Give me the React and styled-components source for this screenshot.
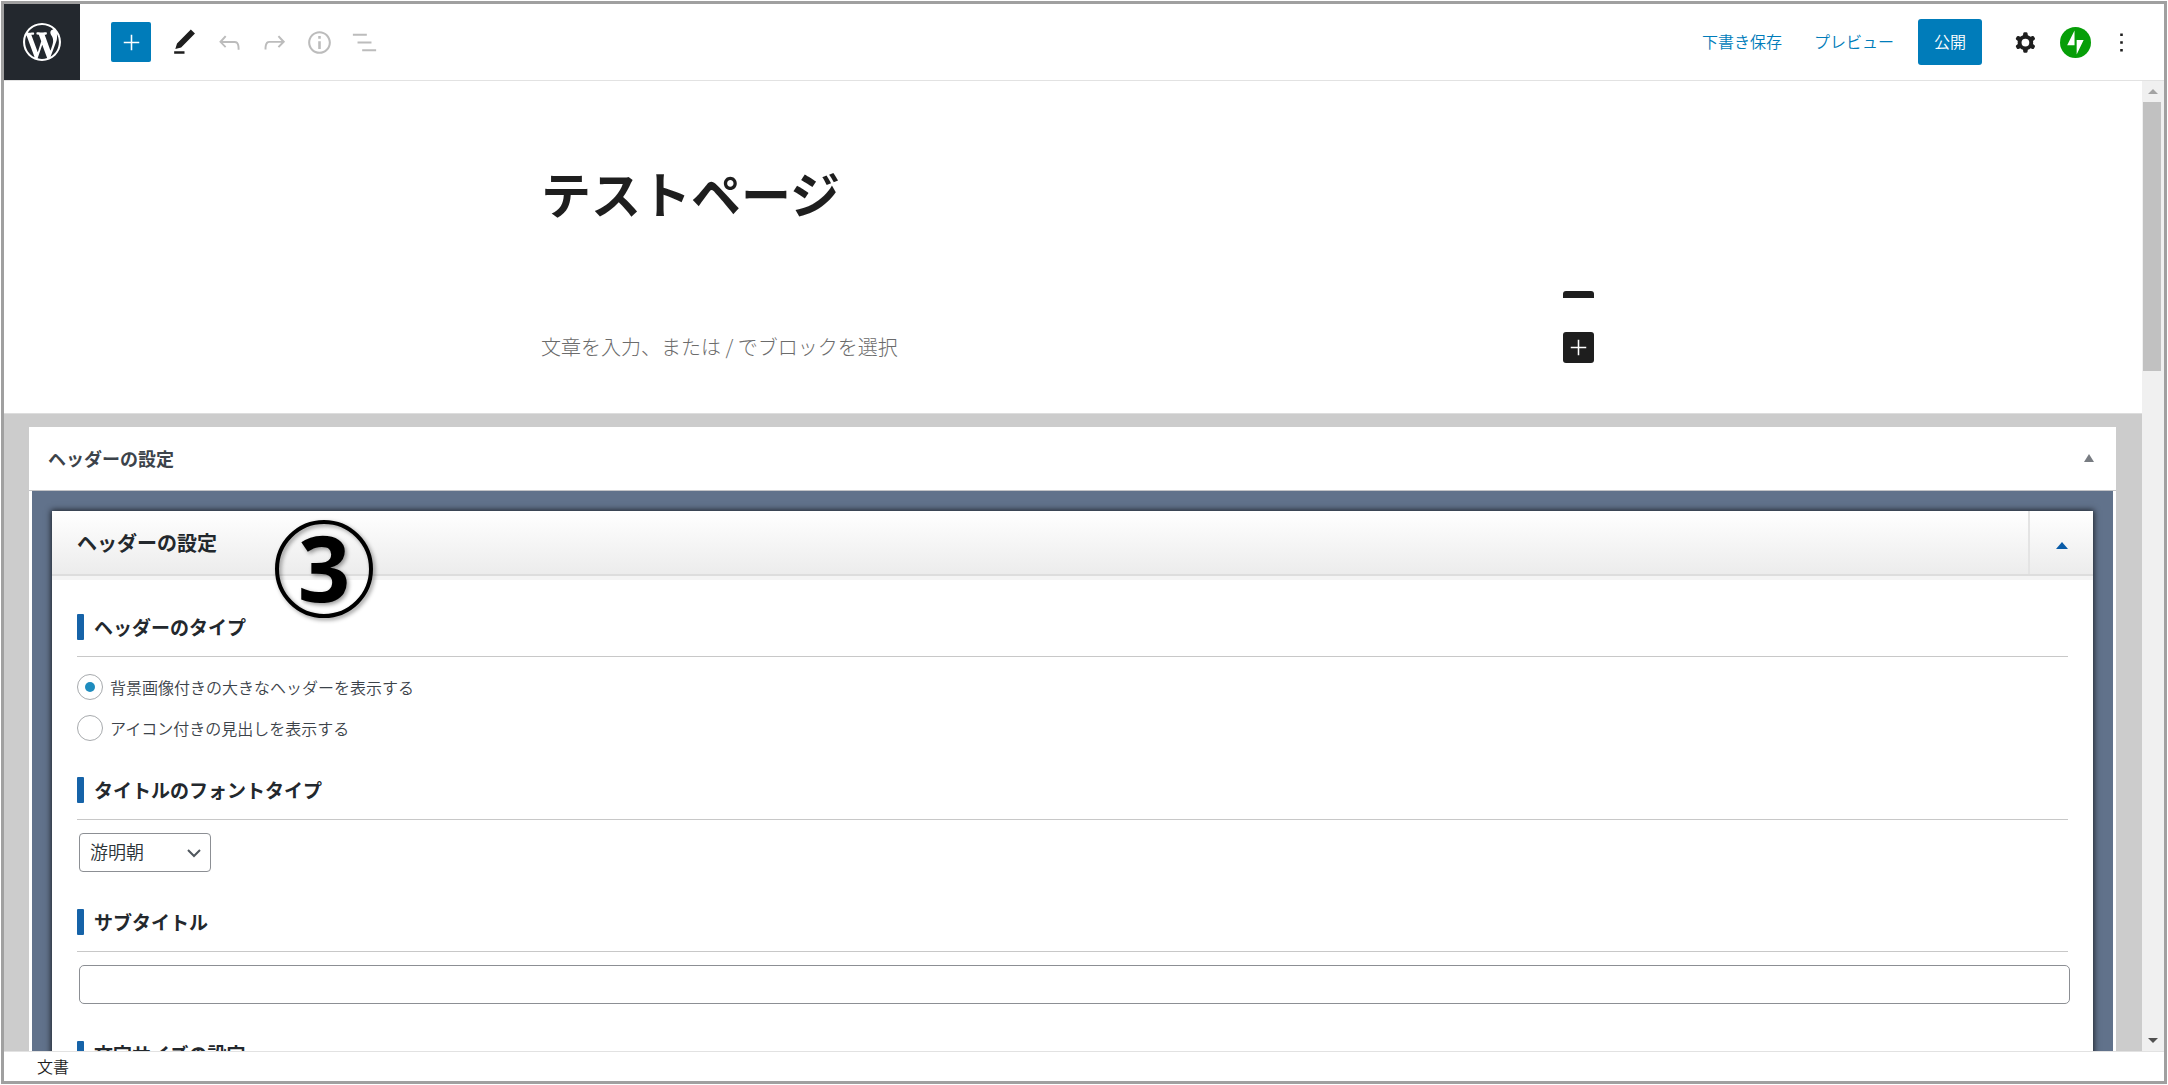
import React from 'react';
import styled, { createGlobalStyle } from 'styled-components';

const GlobalStyle = createGlobalStyle`
    * {
        box-sizing: border-box;
    }

    body {
        margin: 0;
        background: #fff;
        color: #3c434a;
        font-family: "Noto Sans CJK JP", "Noto Sans", sans-serif;
        font-size: 16px;
        font-weight: 350;
    }

    button, input, select {
        font-family: inherit;
        font-weight: inherit;
    }
`;

const Frame = styled.div`
    display: flex;
    flex-direction: column;
    height: calc(100vh - 2px);
    margin: 1px;
    border: 3px solid #a0a0a0;
    background: #fff;
    overflow: hidden;
`;

/* top bar */

const TopBar = styled.header`
    display: flex;
    align-items: center;
    justify-content: space-between;
    flex: none;
    border-bottom: 1px solid #e2e2e2;
`;

const Tools = styled.div`
    display: flex;
    align-items: center;
`;

const SiteLink = styled.a`
    display: flex;
    align-items: center;
    justify-content: center;
    width: 76px;
    height: 76px;
    margin-right: 31px;
    background: #23282e;
    color: #fff;
`;

const InserterButton = styled.button`
    display: flex;
    align-items: center;
    justify-content: center;
    width: 40px;
    height: 40px;
    margin-right: 10px;
    padding: 0;
    border: 0;
    border-radius: 2px;
    background: #007cba;
    color: #fff;
`;

const IconButton = styled.button`
    display: flex;
    align-items: center;
    justify-content: center;
    width: ${({ $wide }) => ($wide ? '50px' : '46px')};
    height: 46px;
    padding: ${({ $wide }) => ($wide ? '0 4px 0 0' : '0')};
    border: 0;
    background: none;
    color: #1e1e1e;
`;

const MutedButton = styled(IconButton)`
    width: 45px;
    color: #bcbcbc;
`;

const Actions = styled.div`
    display: flex;
    align-items: center;
    padding-right: 20px;
`;

const TextButton = styled.button`
    margin-right: ${({ $last }) => ($last ? '24px' : '32px')};
    padding: 0 0 3px;
    border: 0;
    background: none;
    color: #007cba;
    font-size: 16px;
    line-height: 24px;
`;

const PublishButton = styled.button`
    height: 46px;
    margin-right: 20px;
    padding: 0 16px 3px;
    border: 0;
    border-radius: 3px;
    background: #007cba;
    color: #fff;
    font-size: 16px;
`;

/* scrolling area */

const Body = styled.div`
    display: flex;
    flex: 1;
    min-height: 0;
`;

const Content = styled.main`
    flex: 1;
    min-width: 0;
    overflow: hidden;
    background: #ccc;
`;

const ScrollBar = styled.div`
    display: flex;
    flex-direction: column;
    width: 22px;
    background: #f0f0f0;
`;

const ScrollArrow = styled.div`
    display: flex;
    align-items: center;
    justify-content: center;
    height: 21px;
    color: ${({ $dim }) => ($dim ? '#a3a3a3' : '#505050')};
`;

const ScrollTrack = styled.div`
    flex: 1;
    padding: 0 3px 0 1px;
`;

const ScrollThumb = styled.div`
    height: 29%;
    background: #c1c1c1;
`;

const Editor = styled.section`
    padding: 75px 0 48px;
    border-bottom: 1px solid #ddd;
    background: #fff;
`;

const Column = styled.div`
    max-width: 1064px;
    margin: 0 auto;
`;

const PageTitle = styled.h1`
    margin: 0 0 63px;
    color: #1e1e1e;
    font-size: 50px;
    font-weight: 700;
    line-height: 72px;
`;

const ClippedBlock = styled.div`
    width: 31px;
    height: 7px;
    margin: 0 11px 31px auto;
    border-radius: 3px 3px 0 0;
    background: #1e1e1e;
`;

const Paragraph = styled.div`
    display: flex;
    align-items: center;
    justify-content: space-between;
    padding-right: 11px;
    color: #6b6b6b;
    font-size: 20px;
    font-weight: 300;
    line-height: 36px;
`;

const BlockInserter = styled.button`
    display: flex;
    align-items: center;
    justify-content: center;
    width: 31px;
    height: 31px;
    padding: 0;
    border: 0;
    border-radius: 3px;
    background: #1e1e1e;
    color: #fff;
`;

/* meta box */

const MetaBox = styled.section`
    margin: 13px 26px 0 25px;
    background: #fff;
`;

const MetaHeader = styled.div`
    display: flex;
    align-items: center;
    justify-content: space-between;
    height: 64px;
    padding: 0 22px 2px 19px;
    border-bottom: 1px solid #c3c4c7;
`;

const MetaTitle = styled.h2`
    margin: 0;
    font-size: 18px;
    font-weight: 700;
    line-height: 24px;
`;

const ToggleButton = styled.button`
    display: flex;
    align-items: center;
    justify-content: center;
    padding: 0;
    border: 0;
    background: none;
    color: #787c82;
`;

const MetaInside = styled.div`
    margin: 0 3px;
    padding: 20px;
    background: #61728b;
`;

const Panel = styled.div`
    position: relative;
    background: #fff;
    box-shadow: 0 0 6px 1px rgba(0, 0, 0, 0.7);
`;

const PanelHeader = styled.div`
    display: flex;
    justify-content: space-between;
    height: 65px;
    border-bottom: 2px solid #ddd;
    background: linear-gradient(#fff, #ececec);
    box-shadow: 0 4px 0 #f4f4f4;
`;

const PanelTitle = styled.h3`
    margin: 0;
    padding: 18px 25px;
    color: #23282d;
    font-size: 20px;
    font-weight: 700;
    line-height: 28px;
`;

const PanelToggle = styled(ToggleButton)`
    width: 65px;
    padding-top: 6px;
    border-left: 2px solid #e4e4e4;
    color: #0a5ca8;
`;

const StepBadge = styled.div`
    position: absolute;
    top: 9px;
    left: 223px;
    display: flex;
    align-items: center;
    justify-content: center;
    width: 98px;
    height: 98px;
    padding-bottom: 4px;
    border: 4px solid #000;
    border-radius: 50%;
    color: #000;
    font-family: "Noto Sans", sans-serif;
    font-size: 92px;
    font-weight: 700;
    line-height: 86px;
    filter: drop-shadow(2px 2px 2px rgba(0, 0, 0, 0.4));
`;

const PanelBody = styled.div`
    display: flex;
    flex-direction: column;
    gap: 37px;
    padding: 38px 25px;
`;

const SectionTitle = styled.h4`
    display: flex;
    align-items: center;
    margin: 0 0 13px;
    padding-bottom: 16px;
    border-bottom: 1px solid #c8c8c8;
    color: #23282d;
    font-size: 19px;
    font-weight: 700;
    line-height: 26px;

    &::before {
        content: "";
        width: 7px;
        height: 26px;
        margin-right: 10px;
        border-radius: 1px;
        background: #1663a8;
    }
`;

const RadioList = styled.div`
    margin: -4px 0 -8px;
`;

const RadioRow = styled.label`
    display: flex;
    align-items: center;
    height: 41px;
    font-size: 16px;
`;

const Radio = styled.input`
    display: flex;
    align-items: center;
    justify-content: center;
    width: 26px;
    height: 26px;
    margin: 0 7px 0 0;
    border: 1px solid #a7aaad;
    border-radius: 50%;
    background: #fff;
    appearance: none;

    &:checked::before {
        content: "";
        width: 10px;
        height: 10px;
        border-radius: 50%;
        background: #1e8cbe;
    }
`;

const SelectWrap = styled.div`
    position: relative;
    width: 132px;
    margin-left: 2px;

    svg {
        position: absolute;
        top: 13px;
        right: 10px;
        color: #50575e;
        pointer-events: none;
    }
`;

const Select = styled.select`
    display: block;
    width: 100%;
    height: 39px;
    padding: 0 10px 3px;
    border: 1px solid #8c8f94;
    border-radius: 4px;
    background: #fff;
    color: #2c3338;
    font-size: 18px;
    appearance: none;
`;

const TextInput = styled.input`
    display: block;
    width: 100%;
    height: 39px;
    margin-left: 2px;
    padding: 0 10px;
    border: 1px solid #8c8f94;
    border-radius: 5px;
    background: #fff;
    font-size: 18px;
`;

const Footer = styled.footer`
    flex: none;
    height: 30px;
    padding-left: 33px;
    border-top: 1px solid #e2e2e2;
    color: #1e1e1e;
    font-size: 16px;
    line-height: 28px;
`;

const Icon = ({ d, size = 31, viewBox = '0 0 24 24' }) => (
    <svg width={size} height={size} viewBox={viewBox} fill="currentColor" fillRule="evenodd" aria-hidden="true">
        <path d={d} />
    </svg>
);

const Triangle = ({ down, width = 10, height = 8 }) => (
    <svg width={width} height={height} viewBox="0 0 10 8" preserveAspectRatio="none" fill="currentColor" aria-hidden="true">
        <path d={down ? 'M0 0h10L5 8z' : 'M0 8h10L5 0z'} />
    </svg>
);

const wordpress = 'M20 10c0-5.51-4.49-10-10-10C4.48 0 0 4.49 0 10c0 5.52 4.48 10 10 10 5.51 0 10-4.48 10-10zM7.78 15.37L4.37 6.22c.55-.02 1.17-.08 1.17-.08.5-.06.44-1.13-.06-1.11 0 0-1.45.11-2.37.11-.18 0-.37 0-.58-.01C4.12 2.69 6.87 1.11 10 1.11c2.33 0 4.45.87 6.05 2.34-.68-.11-1.65.39-1.65 1.58 0 .74.45 1.36.9 2.1.35.61.55 1.36.55 2.46 0 1.49-1.4 5-1.4 5l-3.03-8.37c.54-.02.82-.17.82-.17.5-.05.44-1.25-.06-1.22 0 0-1.44.12-2.38.12-.87 0-2.33-.12-2.33-.12-.5-.03-.56 1.2-.06 1.22l.92.08 1.26 3.41zM17.41 10c.24-.64.74-1.87.43-4.25.7 1.29 1.05 2.71 1.05 4.25 0 3.29-1.73 6.24-4.4 7.78.97-2.59 1.94-5.2 2.92-7.78zM6.1 18.09C3.12 16.65 1.11 13.53 1.11 10c0-1.3.23-2.48.72-3.59C3.25 10.3 4.67 14.2 6.1 18.09zm4.03-6.63l2.58 6.98c-.86.29-1.76.45-2.71.45-.79 0-1.57-.11-2.29-.33.81-2.38 1.62-4.74 2.42-7.1z';
const plus = 'M18 11.4h-5.4V6h-1.2v5.4H6v1.2h5.4V18h1.2v-5.4H18z';
const pencil = 'M20.1 5.1L16.9 2 6.2 12.7l-1.3 4.4 4.5-1.3L20.1 5.1zM4 20.8h8v-2H4v2z';
const undo = 'M18.3 11.7c-.6-.6-1.4-.9-2.3-.9H6.7l2.9-3.3-1.1-1-4.5 5L8.5 16l1-1-2.7-2.7H16c.5 0 .9.2 1.3.5 1 1 1 3.4 1 4.5v.3h1.5v-.2c0-1.5 0-4.3-1.5-5.7z';
const redo = 'M15.6 6.5l-1.1 1 2.9 3.3H8c-.9 0-1.7.3-2.3.9-1.4 1.5-1.4 4.2-1.4 5.6v.2h1.5v-.3c0-1.1 0-3.5 1-4.5.3-.3.7-.5 1.3-.5h9.2L14.5 15l1.1 1.1 4.6-4.6-4.6-5z';
const info = 'M12 3.2c-4.8 0-8.8 3.9-8.8 8.8 0 4.8 3.9 8.8 8.8 8.8 4.8 0 8.8-3.9 8.8-8.8 0-4.8-4-8.8-8.8-8.8zm0 16c-4 0-7.2-3.3-7.2-7.2C4.8 8 8 4.8 12 4.8s7.2 3.3 7.2 7.2c0 4-3.2 7.2-7.2 7.2zM11 17h2v-6h-2v6zm0-8h2V7h-2v2z';
const outline = 'M13.8 5.2H3v1.5h10.8V5.2zm-3.6 12v1.5H21v-1.5H10.2zm7.2-6H6.6v1.5h10.8v-1.5z';
const cog = 'M10.289 4.836A1 1 0 0111.275 4h1.306a1 1 0 01.987.836l.244 1.466c.787.26 1.503.679 2.108 1.218l1.393-.522a1 1 0 011.216.437l.653 1.13a1 1 0 01-.23 1.273l-1.148.944a6.025 6.025 0 010 2.435l1.149.946a1 1 0 01.23 1.272l-.653 1.13a1 1 0 01-1.216.437l-1.394-.522c-.605.54-1.32.958-2.108 1.218l-.244 1.466a1 1 0 01-.987.836h-1.306a1 1 0 01-.986-.836l-.244-1.466a5.995 5.995 0 01-2.108-1.218l-1.394.522a1 1 0 01-1.217-.436l-.653-1.131a1 1 0 01.23-1.272l1.149-.946a6.026 6.026 0 010-2.435l-1.148-.944a1 1 0 01-.23-1.272l.653-1.131a1 1 0 011.217-.437l1.393.522a5.994 5.994 0 012.108-1.218l.244-1.466zM14.929 12a3 3 0 11-6 0 3 3 0 016 0z';
const dots = 'M13 19h-2v-2h2v2zm0-6h-2v-2h2v2zm0-6h-2V5h2v2z';

const Jetpack = () => (
    <svg width="31" height="31" viewBox="0 0 32 32" aria-hidden="true">
        <circle cx="16" cy="16" r="16" fill="#069e08" />
        <path fill="#fff" d="M15 18.8H7.4L15 3.6v15.2zM17.2 28.4V13.4h7.2l-7.2 15z" />
    </svg>
);

const Chevron = () => (
    <svg width="14" height="14" viewBox="0 0 14 14" fill="none" stroke="currentColor" strokeWidth="2" aria-hidden="true">
        <path d="M1 4l6 6 6-6" />
    </svg>
);

const App = () => {
    return (
        <>
            <GlobalStyle />
            <Frame>
                <TopBar>
                    <Tools>
                        <SiteLink href="#" aria-label="WordPress">
                            <Icon d={wordpress} size={38} viewBox="0 0 20 20" />
                        </SiteLink>
                        <InserterButton aria-label="ブロックを追加"><Icon d={plus} /></InserterButton>
                        <IconButton aria-label="ツール"><Icon d={pencil} /></IconButton>
                        <MutedButton aria-label="元に戻す"><Icon d={undo} /></MutedButton>
                        <MutedButton aria-label="やり直す"><Icon d={redo} /></MutedButton>
                        <MutedButton aria-label="詳細"><Icon d={info} /></MutedButton>
                        <MutedButton aria-label="アウトライン"><Icon d={outline} /></MutedButton>
                    </Tools>
                    <Actions>
                        <TextButton>下書き保存</TextButton>
                        <TextButton $last>プレビュー</TextButton>
                        <PublishButton>公開</PublishButton>
                        <IconButton $wide aria-label="設定"><Icon d={cog} /></IconButton>
                        <IconButton aria-label="Jetpack"><Jetpack /></IconButton>
                        <IconButton aria-label="オプション"><Icon d={dots} /></IconButton>
                    </Actions>
                </TopBar>
                <Body>
                    <Content>
                        <Editor>
                            <Column>
                                <PageTitle>テストページ</PageTitle>
                                <ClippedBlock />
                                <Paragraph>
                                    <span>文章を入力、または / でブロックを選択</span>
                                    <BlockInserter aria-label="ブロックを追加"><Icon d={plus} /></BlockInserter>
                                </Paragraph>
                            </Column>
                        </Editor>
                        <MetaBox>
                            <MetaHeader>
                                <MetaTitle>ヘッダーの設定</MetaTitle>
                                <ToggleButton aria-label="パネルを閉じる"><Triangle /></ToggleButton>
                            </MetaHeader>
                            <MetaInside>
                                <Panel>
                                    <PanelHeader>
                                        <PanelTitle>ヘッダーの設定</PanelTitle>
                                        <PanelToggle aria-label="設定を閉じる"><Triangle width={12} height={7} /></PanelToggle>
                                    </PanelHeader>
                                    <StepBadge>3</StepBadge>
                                    <PanelBody>
                                        <div>
                                            <SectionTitle>ヘッダーのタイプ</SectionTitle>
                                            <RadioList>
                                                <RadioRow>
                                                    <Radio type="radio" name="header-type" defaultChecked />
                                                    背景画像付きの大きなヘッダーを表示する
                                                </RadioRow>
                                                <RadioRow>
                                                    <Radio type="radio" name="header-type" />
                                                    アイコン付きの見出しを表示する
                                                </RadioRow>
                                            </RadioList>
                                        </div>
                                        <div>
                                            <SectionTitle id="font-type">タイトルのフォントタイプ</SectionTitle>
                                            <SelectWrap>
                                                <Select aria-labelledby="font-type">
                                                    <option>游明朝</option>
                                                </Select>
                                                <Chevron />
                                            </SelectWrap>
                                        </div>
                                        <div>
                                            <SectionTitle id="subtitle">サブタイトル</SectionTitle>
                                            <TextInput type="text" aria-labelledby="subtitle" />
                                        </div>
                                        <div>
                                            <SectionTitle>文字サイズの設定</SectionTitle>
                                        </div>
                                    </PanelBody>
                                </Panel>
                            </MetaInside>
                        </MetaBox>
                    </Content>
                    <ScrollBar>
                        <ScrollArrow $dim><Triangle height={5} /></ScrollArrow>
                        <ScrollTrack>
                            <ScrollThumb />
                        </ScrollTrack>
                        <ScrollArrow><Triangle down height={5} /></ScrollArrow>
                    </ScrollBar>
                </Body>
                <Footer>文書</Footer>
            </Frame>
        </>
    );
};

export default App;
